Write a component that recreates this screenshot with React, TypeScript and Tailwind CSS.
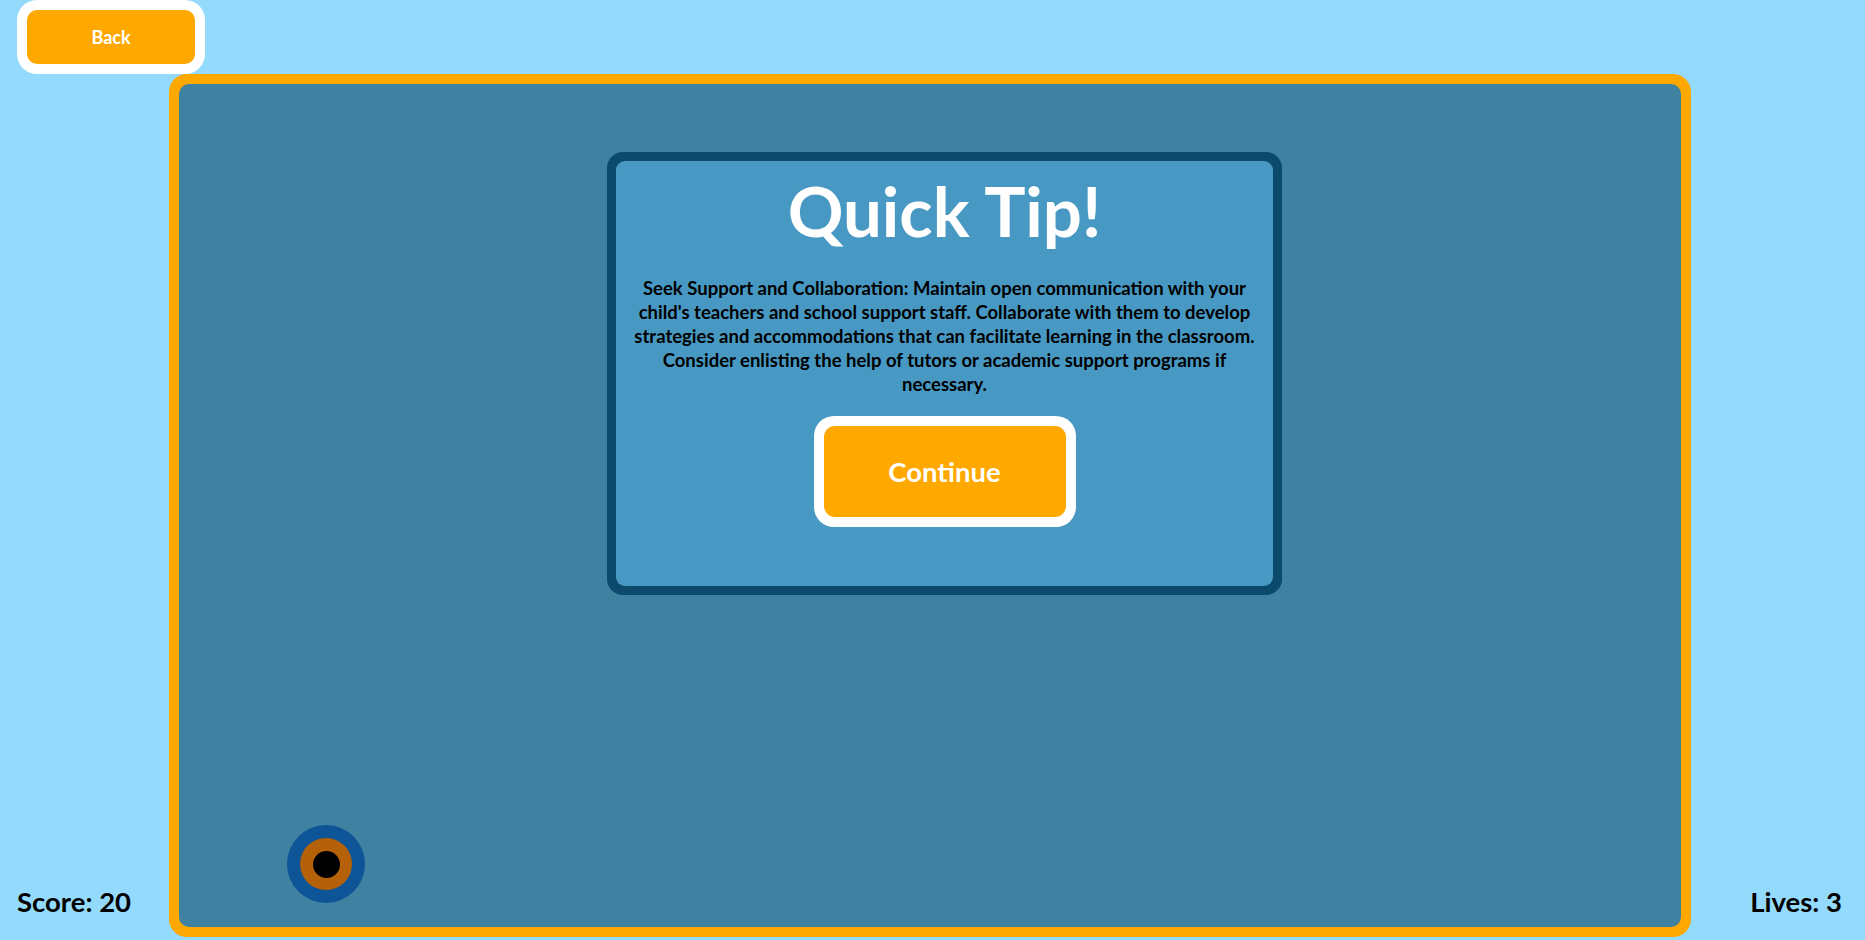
import React from "react";

export default function App() {
  const font = { fontFamily: "Lato, 'Open Sans', sans-serif" };
  return (
    <div className="w-[1865px] h-[940px] bg-[#94dafc] flex flex-col overflow-hidden" style={font}>
      <div className="h-[74px] flex items-start pl-[17px]">
        <button className="w-[188px] h-[74px] rounded-[20px] bg-white p-[10px] flex">
          <span className="flex-1 rounded-[10px] bg-[#ffa800] flex items-center justify-center text-white font-bold text-[18px]">
            Back
          </span>
        </button>
      </div>
      <div className="flex-1 flex pb-[3px]">
        <div className="w-[169px] flex items-end pl-[17px] pb-[22px]">
          <span className="text-black font-bold text-[27.5px] leading-none whitespace-nowrap">Score: 20</span>
        </div>
        <div className="w-[1522px] rounded-[18px] bg-[#ffa800] p-[10px] flex">
          <div className="relative flex-1 min-w-0 rounded-[10px] bg-[#3e81a0] pt-[68px] pl-[428px]">
            <div className="w-[675px] h-[443px] rounded-[16px] bg-[#0b4a6b] p-[9px] flex">
              <div className="flex-1 min-w-0 rounded-[9px] bg-[#4799c3] flex flex-col items-center">
                <h1 className="text-white font-bold text-[69px] leading-none mt-[15px] whitespace-nowrap">Quick Tip!</h1>
                <p className="mt-[31px] text-black font-bold text-[18.5px] leading-[24px] text-center whitespace-nowrap">
                  Seek Support and Collaboration: Maintain open communication with your
                  <br />
                  child's teachers and school support staff. Collaborate with them to develop
                  <br />
                  strategies and accommodations that can facilitate learning in the classroom.
                  <br />
                  Consider enlisting the help of tutors or academic support programs if
                  <br />
                  necessary.
                </p>
                <button className="mt-[20px] w-[262px] h-[111px] rounded-[20px] bg-white p-[10px] flex">
                  <span className="flex-1 rounded-[11px] bg-[#ffa800] flex items-center justify-center text-white font-bold text-[27.5px]">
                    Continue
                  </span>
                </button>
              </div>
            </div>
            <div className="absolute left-[108px] top-[741px] w-[78px] h-[78px] rounded-full bg-[#0d5597] flex items-center justify-center">
              <div className="w-[52px] h-[52px] rounded-full bg-[#b5610a] flex items-center justify-center">
                <div className="w-[27px] h-[27px] rounded-full bg-black" />
              </div>
            </div>
          </div>
        </div>
        <div className="flex-1 flex items-end justify-end pr-[23px] pb-[22px]">
          <span className="text-black font-bold text-[27.5px] leading-none whitespace-nowrap">Lives: 3</span>
        </div>
      </div>
    </div>
  );
}
